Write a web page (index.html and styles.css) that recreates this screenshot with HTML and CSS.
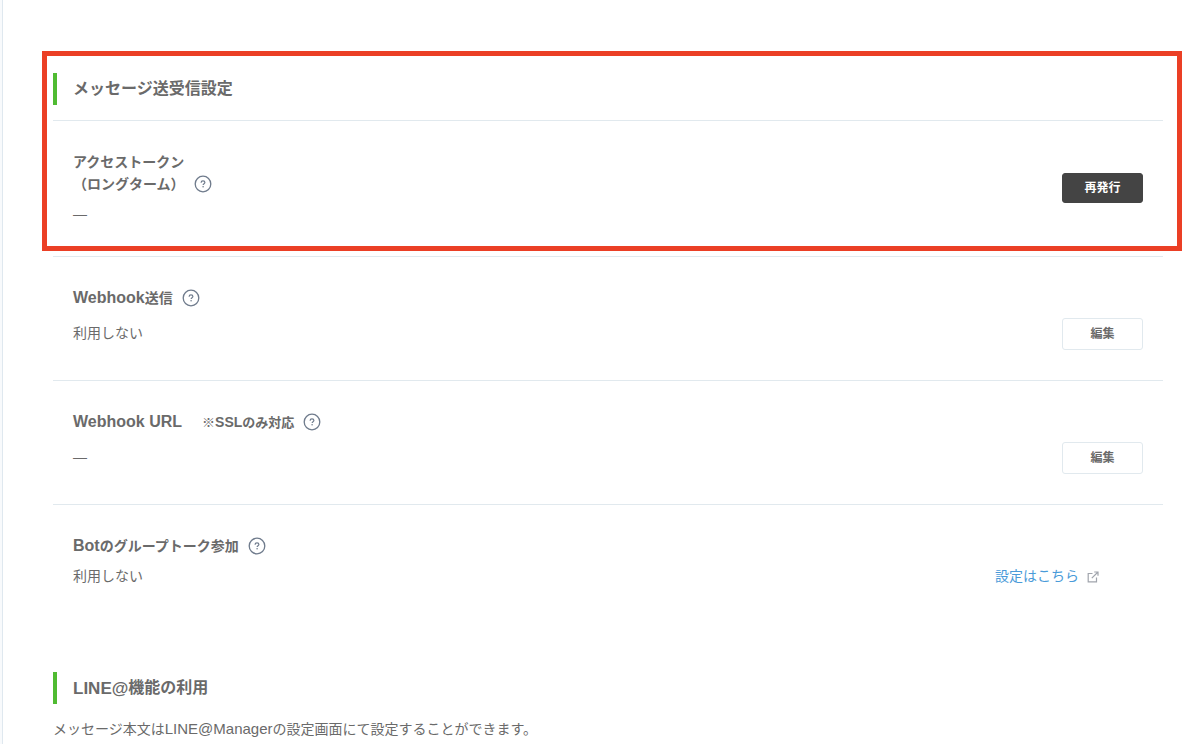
FILE: index.html
```
<!DOCTYPE html>
<html lang="ja">
<head>
    <meta charset="UTF-8">
    <meta name="viewport" content="width=device-width, initial-scale=1.0">
    <title>メッセージ送受信設定</title>
    <link rel="stylesheet" href="styles.css">
</head>
<body>
    <svg class="defs" aria-hidden="true">
        <symbol id="icon-help" viewBox="0 0 18 18">
            <circle cx="9" cy="9" r="7.8" fill="none" stroke="#6f7b8c" stroke-width="1.3"/>
            <path d="M7.1 7.7c0-1.1.7-1.8 1.9-1.8s1.9.7 1.9 1.6c0 1.2-1.8 1.3-1.8 2.6" fill="none" stroke="#6f7b8c" stroke-width="1.2"/>
            <circle cx="9.1" cy="11.8" r=".8" fill="#6f7b8c"/>
        </symbol>
    </svg>

    <main class="page">
        <section class="highlight">
            <h2 class="section-title">メッセージ送受信設定</h2>
            <div class="row row-first">
                <div class="info">
                    <h3 class="label"><span>アクセストークン<br>（ロングターム）</span><button class="help" type="button" aria-label="アクセストークンのヘルプ"><svg><use href="#icon-help"/></svg></button></h3>
                    <p class="value">—</p>
                </div>
                <button class="btn btn-dark" type="button">再発行</button>
            </div>
        </section>

        <section class="settings">
            <div class="row">
                <div class="info info-wide">
                    <h3 class="label"><span><span class="latin">Webhook</span>送信</span><button class="help" type="button" aria-label="Webhook送信のヘルプ"><svg><use href="#icon-help"/></svg></button></h3>
                    <p class="value">利用しない</p>
                </div>
                <button class="btn" type="button">編集</button>
            </div>
            <div class="row">
                <div class="info info-wide">
                    <h3 class="label"><span><span class="latin">Webhook URL</span><span class="note">※<span class="latin">SSL</span>のみ対応</span></span><button class="help" type="button" aria-label="Webhook URLのヘルプ"><svg><use href="#icon-help"/></svg></button></h3>
                    <p class="value">—</p>
                </div>
                <button class="btn" type="button">編集</button>
            </div>
            <div class="row">
                <div class="info">
                    <h3 class="label"><span><span class="latin">Bot</span>のグループトーク参加</span><button class="help" type="button" aria-label="グループトーク参加のヘルプ"><svg><use href="#icon-help"/></svg></button></h3>
                    <p class="value">利用しない</p>
                </div>
                <a class="link" href="#">設定はこちら
                    <svg class="icon-external" viewBox="0 0 12 12" aria-hidden="true">
                        <path d="M5.5 2.5H1.2v8.3h8.3V6.5M7.2 1h3.8v3.8M11 1L4.8 7.2" fill="none" stroke="#a0a4ac" stroke-width="1.2"/>
                    </svg>
                </a>
            </div>
        </section>

        <section class="features">
            <h2 class="section-title section-title-plain"><span class="latin">LINE@</span>機能の利用</h2>
            <p class="description">メッセージ本文は<span class="latin">LINE@Manager</span>の設定画面にて設定することができます。</p>
        </section>
    </main>
</body>
</html>
```

FILE: styles.css
```
* {
    margin: 0;
    padding: 0;
    box-sizing: border-box;
}
body {
    font-family: 'Liberation Sans', 'Noto Sans CJK JP', sans-serif;
    font-size: 14px;
    line-height: 22px;
    color: #6a6a6a;
    background: #f8fafc;
    padding-left: 2px;
}
.defs {
    position: absolute;
    width: 0;
    height: 0;
}
.page {
    min-height: 100vh;
    padding: 51px 18px 4px 39px;
    background: #fff;
    border-left: 1px solid #dfe8ef;
}

/* 赤枠 */
.highlight {
    padding: 17px 14px 21px 6px;
    border: 5px solid #eb3f25;
}
.section-title {
    display: flex;
    align-items: center;
    padding-bottom: 15px;
    border-bottom: 1px solid #e1e9ee;
    font-size: 16px;
    line-height: 24px;
    font-weight: 700;
}
.section-title::before {
    content: '';
    width: 4px;
    height: 32px;
    margin-right: 16px;
    background: #50bb32;
}
.section-title-plain {
    padding-bottom: 0;
    border-bottom: none;
}

/* 設定項目 */
.settings {
    margin: 5px 19px 0 11px;
}
.row {
    display: flex;
    justify-content: space-between;
    align-items: flex-end;
    padding: 30px 20px;
    border-top: 1px solid #e1e9ee;
}
.row-first {
    align-items: center;
    padding-bottom: 0;
    border-top: none;
}
.label {
    display: flex;
    align-items: flex-end;
    font-size: 14px;
    font-weight: 700;
}

/* 欧文は和文より少し大きくする */
.latin {
    font-size: 15px;
    line-height: 1;
}
.label .latin {
    font-size: 16px;
}
.section-title .latin {
    font-size: 17px;
}
.note {
    margin-left: 20px;
    font-size: 13px;
    line-height: 1;
}
.label .note .latin {
    font-size: 14px;
}
.value {
    margin-top: 8px;
}
.info-wide {
    padding-bottom: 6px;
}
.info-wide .value {
    margin-top: 13px;
}
.help {
    width: 18px;
    height: 18px;
    margin: 0 0 2px 9px;
    border: none;
    background: none;
    cursor: pointer;
}
.help svg {
    display: block;
    width: 18px;
    height: 18px;
}
.btn {
    width: 81px;
    height: 32px;
    font-family: inherit;
    font-size: 12px;
    line-height: 18px;
    font-weight: 700;
    color: #6a6a6a;
    background: #fff;
    border: 1px solid #e1e9ee;
    border-radius: 3px;
    cursor: pointer;
}
.btn-dark {
    height: 30px;
    color: #fff;
    background: #444;
    border-color: #444;
}
.link {
    display: flex;
    align-items: center;
    gap: 8px;
    margin-right: 44px;
    color: #4a9bd9;
    text-decoration: none;
}
.icon-external {
    width: 12px;
    height: 12px;
    margin-top: 2px;
}

.features {
    margin: 55px 19px 0 11px;
}
.description {
    margin-top: 14px;
}
```
